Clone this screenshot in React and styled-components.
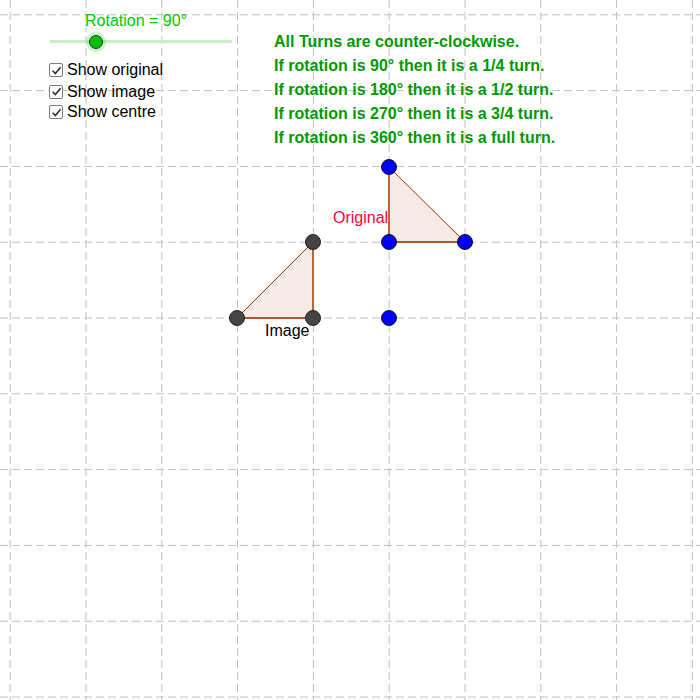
import React from "react";
import styled, { createGlobalStyle } from "styled-components";

const GlobalStyle = createGlobalStyle`
  html, body {
    margin: 0;
    padding: 0;
    background: #ffffff;
  }
  body {
    font-family: "Liberation Sans", Arial, sans-serif;
  }
`;

const Stage = styled.div`
  position: relative;
  width: 700px;
  height: 700px;
  overflow: hidden;
  background: #ffffff;
`;

const Canvas = styled.svg`
  position: absolute;
  inset: 0;
  display: block;
`;

const ControlPanel = styled.div`
  position: absolute;
  left: 48px;
  top: 10px;
  width: 190px;
  display: flex;
  flex-direction: column;
`;

const SliderLabel = styled.div`
  margin-left: 37px;
  font-size: 16px;
  line-height: 22px;
  color: #00c800;
`;

const SliderTrack = styled.div`
  position: relative;
  margin: 8px 0 0 2px;
  width: 182px;
  height: 3px;
  background: #c9ecc9;
`;

const SliderKnob = styled.div`
  position: absolute;
  top: 50%;
  width: 12px;
  height: 12px;
  border-radius: 50%;
  background: #00c000;
  border: 1px solid #333;
  box-shadow: 0 0 0 3px rgba(0, 192, 0, 0.22);
  transform: translate(-50%, -50%);
`;

const CheckList = styled.div`
  display: flex;
  flex-direction: column;
  margin-top: 16px;
`;

const CheckRow = styled.label`
  display: flex;
  align-items: center;
  gap: 4px;
  height: ${(p) => p.$h}px;
  font-size: 16px;
  color: #000;
`;

const Box = styled.span`
  width: 12px;
  height: 12px;
  margin-left: 1px;
  border: 1px solid #7a7a7a;
  border-radius: 2px;
  background: #fff;
  display: flex;
  align-items: center;
  justify-content: center;
`;

const InfoText = styled.div`
  position: absolute;
  left: 274px;
  top: 30px;
  font-size: 16px;
  font-weight: bold;
  line-height: 24px;
  color: #009900;
  white-space: nowrap;
`;

const GRID_X0 = 10.2;
const GRID_Y0 = 14.8;
const STEP = 75.8;

const Check = () => (
  <svg width="11" height="11" viewBox="0 0 10 10">
    <path d="M1.5 5.2 L4 7.8 L8.7 2" fill="none" stroke="#333" strokeWidth="1.5" />
  </svg>
);

const Point = ({ x, y, fill, stroke }) => (
  <circle cx={x} cy={y} r="7.5" fill={fill} stroke={stroke} strokeWidth="1" />
);

const Triangle = ({ right, a, b }) => (
  <g>
    <polygon
      points={`${right[0]},${right[1]} ${a[0]},${a[1]} ${b[0]},${b[1]}`}
      fill="#993300"
      fillOpacity="0.1"
      stroke="none"
    />
    <line x1={a[0]} y1={a[1]} x2={b[0]} y2={b[1]} stroke="#a33000" strokeWidth="1" />
    <line x1={right[0]} y1={right[1]} x2={a[0]} y2={a[1]} stroke="#c0643a" strokeWidth="2" />
    <line x1={right[0]} y1={right[1]} x2={b[0]} y2={b[1]} stroke="#b05530" strokeWidth="2" />
  </g>
);

const lines = [
  "All Turns are counter-clockwise.",
  "If rotation is 90° then it is a 1/4 turn.",
  "If rotation is 180° then it is a 1/2 turn.",
  "If rotation is 270° then it is a 3/4 turn.",
  "If rotation is 360° then it is a full turn.",
];

const checks = [
  { label: "Show original", h: 22 },
  { label: "Show image", h: 21 },
  { label: "Show centre", h: 20 },
];

const App = () => {
  const ticks = Array.from({ length: 10 }, (_, i) => i);

  return (
    <Stage>
      <GlobalStyle />
      <Canvas width="700" height="700" viewBox="0 0 700 700">
        {ticks.map((i) => (
          <line
            key={"v" + i}
            x1={GRID_X0 + i * STEP}
            y1="0"
            x2={GRID_X0 + i * STEP}
            y2="700"
            stroke="#c0c0c0"
            strokeWidth="1"
            strokeDasharray="8 4"
          />
        ))}
        {ticks.map((i) => (
          <line
            key={"h" + i}
            x1="0"
            y1={GRID_Y0 + i * STEP}
            x2="700"
            y2={GRID_Y0 + i * STEP}
            stroke="#c0c0c0"
            strokeWidth="1"
            strokeDasharray="8 4"
          />
        ))}

        <Triangle right={[389, 242]} a={[389, 167]} b={[465, 242]} />
        <Triangle right={[313, 318]} a={[313, 242]} b={[237, 318]} />

        <Point x={389} y={167} fill="#0000ff" stroke="#111" />
        <Point x={389} y={242} fill="#0000ff" stroke="#111" />
        <Point x={465} y={242} fill="#0000ff" stroke="#111" />
        <Point x={389} y={318} fill="#0000ff" stroke="#111" />

        <Point x={313} y={242} fill="#444444" stroke="#222" />
        <Point x={237} y={318} fill="#444444" stroke="#222" />
        <Point x={313} y={318} fill="#444444" stroke="#222" />

        <text
          x="333"
          y="223"
          fill="#ff0033"
          fontSize="16"
          fontFamily="'Liberation Sans', Arial, sans-serif"
        >
          Original
        </text>
        <text
          x="265"
          y="336"
          fill="#000"
          fontSize="16"
          fontFamily="'Liberation Sans', Arial, sans-serif"
        >
          Image
        </text>
      </Canvas>

      <ControlPanel>
        <SliderLabel>Rotation = 90°</SliderLabel>
        <SliderTrack>
          <SliderKnob style={{ left: `${(90 / 360) * 100}%` }} />
        </SliderTrack>
        <CheckList>
          {checks.map((c) => (
            <CheckRow key={c.label} $h={c.h}>
              <Box>
                <Check />
              </Box>
              {c.label}
            </CheckRow>
          ))}
        </CheckList>
      </ControlPanel>

      <InfoText>
        {lines.map((l) => (
          <div key={l}>{l}</div>
        ))}
      </InfoText>
    </Stage>
  );
};

export default App;
